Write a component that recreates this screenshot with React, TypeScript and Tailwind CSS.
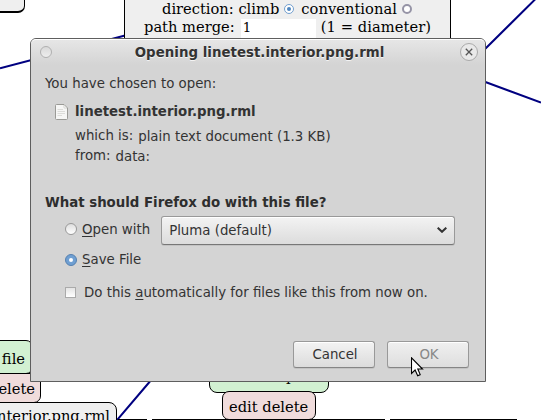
import React from "react";

const sans = "font-['DejaVu_Sans',sans-serif]";
const serif = "font-['DejaVu_Serif',serif]";

function Canvas() {
  return (
    <div className={`absolute inset-0 text-[14.67px] leading-[18px] whitespace-nowrap text-black ${serif}`}>
      <svg className="absolute inset-0" width="541" height="420" fill="none" stroke="#000080" strokeWidth="2">
        <path d="M0 68.2L125 35.5M480 54L536 -1.5M480 80L541 102.5M112 426L152 379" />
      </svg>

      <div className="absolute -left-5 -top-5 h-[33px] w-[45px] rounded-[7px] border border-b-2 border-black bg-[#efefef]" />

      <div className="absolute left-[124px] -top-5 h-[70px] w-[327px] border border-black bg-[#efefef] pt-[18px]">
        <div className="flex h-[19px] items-center pl-[37px]">
          <span>direction: climb</span>
          <span className="ml-[5px] mt-px flex size-[10px] items-center justify-center rounded-full border-[1.5px] border-[#729fcf] bg-white">
            <span className="size-1 rounded-full bg-[#4f86c0]" />
          </span>
          <span className="ml-[7px] tracking-[0.05px]">conventional</span>
          <span className="ml-[5px] mt-px size-[10px] rounded-full border-2 border-[#9694a6] bg-white" />
        </div>
        <div className="flex h-[19px] items-center pl-[19px]">
          <span className="-mt-px">path merge:</span>
          <span className="ml-[6px] mt-px h-[19px] w-[75px] bg-white pl-[2px] text-[13.33px]">1</span>
          <span className="-mt-px ml-[5px] tracking-[0.08px]">(1 = diameter)</span>
        </div>
      </div>

      <div className="absolute -left-10 top-[340px] flex h-[34px] w-[73px] justify-end rounded-[7px] border border-black bg-[#d2f1d2] pr-[7px] pt-[9px]">file</div>
      <div className="absolute -left-10 top-[373px] flex h-[30px] w-[81px] justify-end rounded-b-[7px] border border-black bg-[#f0dcdc] pr-[5px] pt-[6px]">delete</div>
      <div className="absolute -left-20 top-[402px] flex h-[40px] w-[197px] justify-end rounded-[8px] border border-black bg-[#efefef] pr-[6px] pt-[4px]">interior.png.rml</div>
      <div className="absolute left-[209px] top-[360px] h-[33px] w-[120px] rounded-[8px] border border-black bg-[#d2f1d2] pl-[76px] pt-[6px]">p</div>
      <div className="absolute left-[222px] top-[391px] h-[29px] w-[94px] rounded-[7px] border border-black bg-[#f0dcdc] pl-[6px] pt-[6px]">edit delete</div>
      <div className="absolute left-[118px] top-[419px] h-px w-[29px] bg-black" />
      <div className="absolute left-[152px] top-[419px] h-px w-[233px] bg-black" />
      <div className="absolute left-[390px] top-[419px] h-px w-[127px] bg-black" />
    </div>
  );
}

function Radio({ on = false }: { on?: boolean }) {
  return on ? (
    <span className="flex size-3 shrink-0 items-center justify-center rounded-full border border-[#5681b0] bg-[#6f9fd2]">
      <span className="size-1 rounded-full bg-white" />
    </span>
  ) : (
    <span className="-mt-0.5 size-3 shrink-0 rounded-full border border-[#999] bg-gradient-to-b from-[#dedede] to-white" />
  );
}

function FileIcon() {
  return (
    <svg width="13" height="16" viewBox="0 0 13 16" fill="none">
      <path d="M1.5 .5H9L12.5 4V14.5Q12.5 15.5 11.5 15.5H1.5Q.5 15.5 .5 14.5V1.5Q.5 .5 1.5 .5Z" fill="#f6f6f5" stroke="#9a9a96" />
      <path d="M9 1V3.5Q9 4 9.5 4H12Z" fill="#fff" stroke="#c4c4c0" strokeWidth=".7" />
      <path d="M2.5 5.5H8M2.5 7.5H10M2.5 9.5H10M2.5 11.5H7" stroke="#dcdcd9" />
    </svg>
  );
}

function Dialog() {
  return (
    <div className={`absolute left-[30px] top-[38px] flex h-[344px] w-[456px] flex-col rounded-t-[6px] border border-[#5e5e5e] bg-[#d4d4d4] text-[13.33px] leading-[16px] whitespace-nowrap text-[#333] ${sans}`}>
      <div className="flex h-[26px] shrink-0 items-center justify-between rounded-t-[5px] border-t border-white bg-gradient-to-b from-[#e6e6e6] to-[#d4d4d4] pl-[9px] pr-[7px]">
        <span className="-mt-0.5 size-3 rounded-full border border-[#b0b0b0] bg-gradient-to-b from-[#d9d9d9] to-[#eee]" />
        <span className="ml-[7px] font-bold tracking-[0.04px] [text-shadow:0_1px_0_#f4f4f4]">Opening linetest.interior.png.rml</span>
        <span className="-mt-0.5 flex size-[18px] items-center justify-center rounded-full border border-[#aaa] bg-[#e9e9e9]">
          <svg width="8" height="8" viewBox="0 0 8 8" stroke="#555" strokeWidth="1.3"><path d="M.8 .8L7.2 7.2M7.2 .8L.8 7.2" /></svg>
        </span>
      </div>
      <div className="flex flex-col pl-[14px] pt-[11px]">
        <p>You have chosen to open:</p>
        <div className="mt-3 flex items-center pl-[10px]">
          <FileIcon />
          <span className="ml-[7px] font-bold">linetest.interior.png.rml</span>
        </div>
        <div className="mt-[8px] flex pl-[30px]">
          <span>which is:</span><span className="ml-[5px] mt-px">plain text document (1.3 KB)</span>
        </div>
        <div className="mt-[3px] flex pl-[30px]">
          <span>from:</span><span className="ml-[5px] mt-px">data:</span>
        </div>
        <p className="mt-[30px] font-bold text-[#2e2e2e]">What should Firefox do with this file?</p>
        <div className="mt-[5px] flex h-[28px] items-center pl-[20px]">
          <Radio />
          <span className="ml-[5px] -mt-px"><u className="underline-offset-2">O</u>pen with</span>
          <div className="ml-[11px] flex h-[29px] w-[294px] items-center justify-between rounded-[3px] border border-[#999] border-b-[#777] bg-gradient-to-b from-[#f3f3f3] to-[#dcdcdc] pl-[7px] pr-[7px] shadow-[inset_0_1px_0_#fff,0_1px_0_#c3c3c3]">
            <span className="mt-px">Pluma (default)</span>
            <svg width="10" height="6" viewBox="0 0 10 6" fill="none" stroke="#333" strokeWidth="2"><path d="M.7 .7L5 4.8L9.3 .7" /></svg>
          </div>
        </div>
        <div className="mt-[8px] flex items-center pl-[20px]">
          <Radio on />
          <span className="ml-[5px]"><u className="underline-offset-2">S</u>ave File</span>
        </div>
        <div className="mt-[17px] flex items-center pl-[20px]">
          <span className="-mt-px size-[11px] border border-[#aaa] bg-gradient-to-b from-[#e4e4e4] to-white" />
          <span className="ml-[8px]">Do this <u className="underline-offset-2">a</u>utomatically for files like this from now on.</span>
        </div>
      </div>
      <div className="mt-auto mb-[13px] flex justify-end gap-3 pr-[16px]">
        <button className="h-[27px] w-[82px] rounded-[3px] border border-[#999] border-b-[#858585] bg-gradient-to-b from-[#f3f3f3] to-[#dcdcdc] pl-[2px] shadow-[inset_0_1px_0_#fff,0_1px_0_#c3c3c3]">Cancel</button>
        <button className="h-[27px] w-[82px] rounded-[3px] border border-[#999] border-b-[#858585] bg-gradient-to-b from-[#f0f0f0] to-[#dedede] pl-[2px] text-[#888] shadow-[inset_0_1px_0_#fff,0_1px_0_#c3c3c3]">OK</button>
      </div>
    </div>
  );
}

export default function App() {
  return (
    <div className="relative h-[420px] w-[541px] overflow-hidden bg-white">
      <Canvas />
      <Dialog />
      <svg className="absolute left-[411px] top-[357px]" width="13" height="20" viewBox="0 0 13 20">
        <path d="M.5 .8V16.5L4.1 13L6.7 18.7L9.2 17.6L6.8 12H11.5Z" fill="#fff" stroke="#000" strokeWidth="1.1" />
      </svg>
    </div>
  );
}
